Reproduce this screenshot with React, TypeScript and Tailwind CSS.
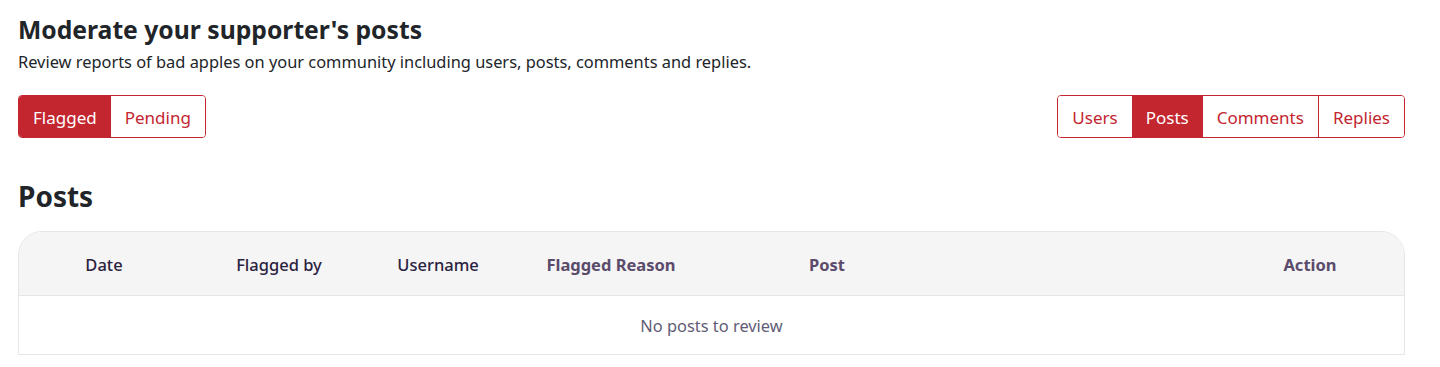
export default function App() {
  const leftTabs = ["Flagged", "Pending"];
  const rightTabs = ["Users", "Posts", "Comments", "Replies"];

  return (
    <div className="bg-white min-h-[367px] pl-[18px] pr-[35px] pt-[13px] font-['Segoe_UI','Noto_Sans',sans-serif] text-[#212529]">
      <h1 className="text-[24.7px] font-bold leading-[33px]">Moderate your supporter's posts</h1>
      <p className="text-[16.4px] leading-[24px] mt-[4px]">
        Review reports of bad apples on your community including users, posts, comments and replies.
      </p>

      <div className="flex justify-between mt-[21px]">
        <div className="flex border border-[#c3262f] rounded-[4px] overflow-hidden h-[43px]">
          {leftTabs.map((t, i) => (
            <button
              key={t}
              className={
                i === 0
                  ? "px-[14px] pt-[2px] text-[17px] bg-[#c3262f] text-white"
                  : "px-[14px] pt-[2px] text-[17px] bg-white text-[#c3262f]"
              }
            >
              {t}
            </button>
          ))}
        </div>
        <div className="flex border border-[#c3262f] rounded-[4px] overflow-hidden h-[43px]">
          {rightTabs.map((t, i) => (
            <button
              key={t}
              className={
                i === 1
                  ? "px-[14px] pt-[2px] text-[17px] bg-[#c3262f] text-white"
                  : i === 3
                  ? "px-[14px] pt-[2px] text-[17px] bg-white text-[#c3262f] border-l border-[#c3262f]"
                  : "px-[14px] pt-[2px] text-[17px] bg-white text-[#c3262f]"
              }
            >
              {t}
            </button>
          ))}
        </div>
      </div>

      <h2 className="text-[28px] font-bold leading-[40px] mt-[38px]">Posts</h2>

      <div className="mt-[15px] border border-[#e6e6e6] rounded-t-[24px] overflow-hidden">
        <div className="grid grid-cols-[170px_180px_138px_208px_224px_1fr_188px] h-[64px] pt-[4px] items-center bg-[#f5f5f5] border-b border-[#e6e6e6] text-[16.5px]">
          <div className="text-center font-medium text-[#2b2140]">Date</div>
          <div className="text-center font-medium text-[#2b2140]">Flagged by</div>
          <div className="text-center font-medium text-[#2b2140]">Username</div>
          <div className="text-center font-bold text-[#5b4b6b]">Flagged Reason</div>
          <div className="text-center font-bold text-[#5b4b6b]">Post</div>
          <div />
          <div className="text-center font-bold text-[#5b4b6b]">Action</div>
        </div>
        <div className="h-[58px] pt-[3px] flex items-center justify-center text-[16.4px] text-[#5f5c75]">
          No posts to review
        </div>
      </div>
    </div>
  );
}
